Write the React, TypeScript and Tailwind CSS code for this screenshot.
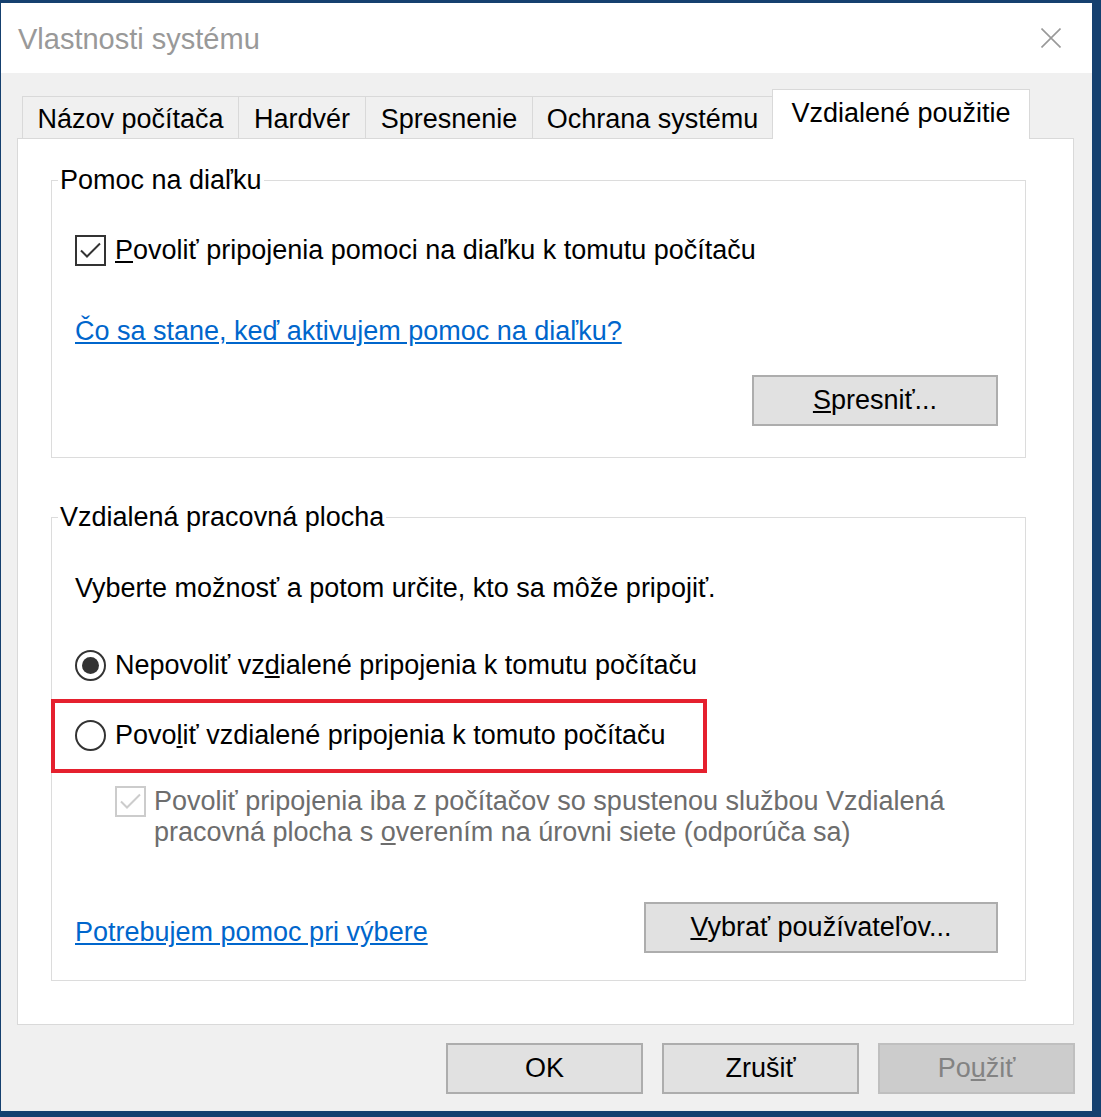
import React from "react";

const font = { fontFamily: '"Liberation Sans", Arial, sans-serif' };

function CheckBox({ disabled }: { disabled?: boolean }) {
  const c = disabled ? "#cccccc" : "#333333";
  return (
    <div
      className={
        "w-[31px] h-[31px] shrink-0 border-2 bg-white flex items-center justify-center " +
        (disabled ? "border-[#cccccc]" : "border-[#333333]")
      }
    >
      <svg width="23" height="23" viewBox="0 0 23 23">
        <path d="M2 11.5 L8 17.5 L21 4.5" fill="none" stroke={c} strokeWidth="2" />
      </svg>
    </div>
  );
}

function Radio({ checked }: { checked?: boolean }) {
  return (
    <div className="w-[31px] h-[31px] shrink-0 rounded-full border-2 border-[#333333] bg-white flex items-center justify-center">
      {checked && <div className="w-[17px] h-[17px] rounded-full bg-[#333333]" />}
    </div>
  );
}

function Btn({ children, w, disabled }: { children: React.ReactNode; w: string; disabled?: boolean }) {
  return (
    <div
      className={
        "h-[51px] border-2 flex items-center justify-center text-[27px] " +
        w +
        (disabled
          ? " bg-[#cccccc] border-[#bfbfbf] text-[#838383]"
          : " bg-[#e1e1e1] border-[#adadad] text-black")
      }
    >
      {children}
    </div>
  );
}

export default function App() {
  return (
    <div
      className="w-[1101px] h-[1117px] bg-[#15406f] pt-[3px] pl-[1px] overflow-hidden"
      style={font}
    >
      <div className="w-[1091px] h-[1108px] bg-[#f0f0f0] flex flex-col">
        {/* Title bar */}
        <div className="h-[70px] bg-white flex items-center justify-between pl-[17px] pr-[31px] shrink-0">
          <span className="text-[29px] text-[#999999] leading-none pt-[2px]">Vlastnosti systému</span>
          <svg width="20" height="20" viewBox="0 0 20 20">
            <path d="M0.5 0.5 L19.5 19.5 M19.5 0.5 L0.5 19.5" stroke="#999999" strokeWidth="1.6" />
          </svg>
        </div>

        {/* Body */}
        <div className="flex flex-col pt-[16px] px-[16px]">
          {/* Tabs */}
          <div className="flex items-end h-[50px] ml-[5px] text-[27px] text-black">
            <div className="w-[216px] h-[43px] border-l border-t border-[#d9d9d9] bg-[#f0f0f0] flex items-center justify-center pt-[3px]">
              Názov počítača
            </div>
            <div className="w-[127px] h-[43px] border-l border-t border-[#d9d9d9] bg-[#f0f0f0] flex items-center justify-center pt-[3px]">
              Hardvér
            </div>
            <div className="w-[167px] h-[43px] border-l border-t border-[#d9d9d9] bg-[#f0f0f0] flex items-center justify-center pt-[3px]">
              Spresnenie
            </div>
            <div className="w-[240px] h-[43px] border-l border-t border-[#d9d9d9] bg-[#f0f0f0] flex items-center justify-center pt-[3px]">
              Ochrana systému
            </div>
            <div className="relative z-10 w-[258px] h-[50px] border-l border-t border-r border-[#d9d9d9] bg-white flex items-center justify-center pb-[2px]">
              Vzdialené použitie
            </div>
          </div>

          {/* Panel */}
          <div className="-mt-[1px] w-[1057px] h-[887px] border border-[#d9d9d9] bg-white pl-[33px] pr-[47px] pt-[41px] text-[27px] text-black">
            {/* Group 1 */}
            <div className="h-[278px] border border-[#dcdcdc] flex flex-col pl-[23px]">
              <div className="-mt-[16px] -ml-[17px] px-[2px] bg-white w-fit leading-[31px]">Pomoc na diaľku</div>
              <div className="mt-[39px] h-[31px] flex items-center">
                <CheckBox />
                <span className="ml-[9px] leading-[31px]">
                  <span className="underline">P</span>ovoliť pripojenia pomoci na diaľku k tomutu počítaču
                </span>
              </div>
              <div className="mt-[50px] leading-[31px] text-[#0066cc] underline w-fit">
                Čo sa stane, keď aktivujem pomoc na diaľku?
              </div>
              <div className="mt-[28px] self-end mr-[27px]">
                <Btn w="w-[246px]">
                  <span>
                    <span className="underline">S</span>presniť...
                  </span>
                </Btn>
              </div>
            </div>

            {/* Group 2 */}
            <div className="relative mt-[59px] h-[464px] border border-[#dcdcdc] flex flex-col pl-[23px]">
              <div className="-mt-[16px] -ml-[17px] px-[2px] bg-white w-fit leading-[31px]">
                Vzdialená pracovná plocha
              </div>
              <div className="mt-[40px] leading-[31px]">Vyberte možnosť a potom určite, kto sa môže pripojiť.</div>
              <div className="mt-[46px] h-[31px] flex items-center">
                <Radio checked />
                <span className="ml-[9px] leading-[31px]">
                  Nepovoliť vz<span className="underline">d</span>ialené pripojenia k tomutu počítaču
                </span>
              </div>
              <div className="mt-[39px] h-[31px] flex items-center">
                <Radio />
                <span className="ml-[9px] leading-[31px]">
                  Povo<span className="underline">l</span>iť vzdialené pripojenia k tomuto počítaču
                </span>
              </div>
              <div className="mt-[35px] flex items-start pl-[40px]">
                <CheckBox disabled />
                <div className="ml-[8px] leading-[31px] text-[#6d6d6d]">
                  Povoliť pripojenia iba z počítačov so spustenou službou Vzdialená
                  <br />
                  pracovná plocha s <span className="underline">o</span>verením na úrovni siete (odporúča sa)
                </div>
              </div>
              <div className="mt-[54px] flex items-center justify-between pr-[27px]">
                <span className="leading-[31px] pt-[10px] text-[#0066cc] underline">Potrebujem pomoc pri výbere</span>
                <Btn w="w-[354px]">
                  <span>
                    <span className="underline">V</span>ybrať používateľov...
                  </span>
                </Btn>
              </div>

              {/* red highlight annotation */}
              <div className="absolute left-[-1px] top-[181px] w-[656px] h-[74px] border-4 border-[#e5202e]" />
            </div>
          </div>

          {/* Bottom buttons */}
          <div className="mt-[18px] flex justify-end gap-[19px] pr-[1px]">
            <Btn w="w-[197px]">OK</Btn>
            <Btn w="w-[197px]">Zrušiť</Btn>
            <Btn w="w-[197px]" disabled>
              <span>
                Po<span className="underline">u</span>žiť
              </span>
            </Btn>
          </div>
        </div>
      </div>
    </div>
  );
}
